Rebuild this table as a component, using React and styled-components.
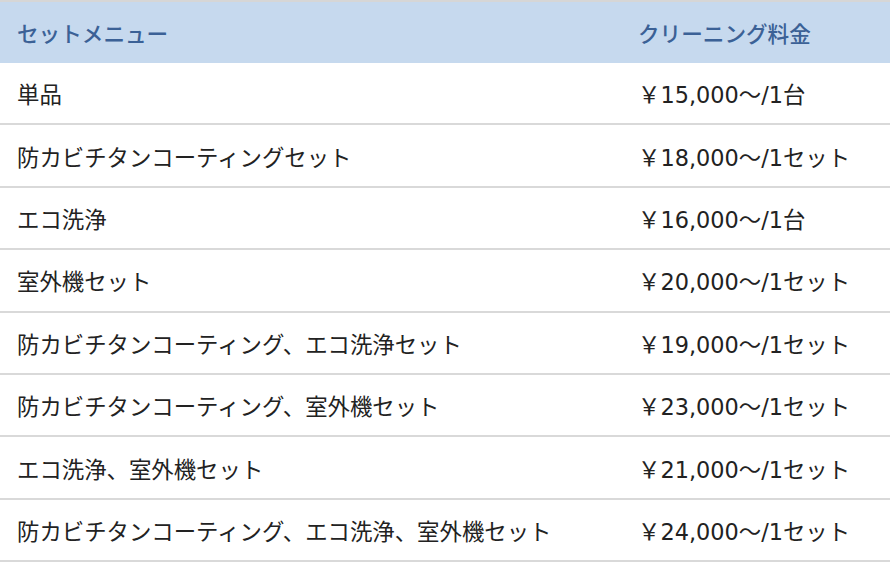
import React from 'react';
import styled, { createGlobalStyle } from 'styled-components';

const GlobalStyle = createGlobalStyle`
  body {
    margin: 0;
    background: #fff;
    font-family: "Noto Sans CJK JP", "Noto Sans", sans-serif;
  }
`;

const rows = [
  ['単品', '￥15,000～/1台'],
  ['防カビチタンコーティングセット', '￥18,000～/1セット'],
  ['エコ洗浄', '￥16,000～/1台'],
  ['室外機セット', '￥20,000～/1セット'],
  ['防カビチタンコーティング、エコ洗浄セット', '￥19,000～/1セット'],
  ['防カビチタンコーティング、室外機セット', '￥23,000～/1セット'],
  ['エコ洗浄、室外機セット', '￥21,000～/1セット'],
  ['防カビチタンコーティング、エコ洗浄、室外機セット', '￥24,000～/1セット'],
];

export default function App() {
  return (
    <>
      <GlobalStyle />
      <Table>
        <thead>
          <tr>
            <Th>セットメニュー</Th>
            <Th>クリーニング料金</Th>
          </tr>
        </thead>
        <tbody>
          {rows.map(([menu, price]) => (
            <Tr key={menu}>
              <Td>{menu}</Td>
              <Td $price>{price}</Td>
            </Tr>
          ))}
        </tbody>
      </Table>
    </>
  );
}

const Table = styled.table`
  width: 890px;
  border-collapse: collapse;
  border-top: 2px solid #d6d6d6;
  table-layout: fixed;

  th:first-child, td:first-child {
    width: 621px;
    padding-left: 17px;
  }
`;

const Th = styled.th`
  height: 61px;
  padding: 0;
  background: #c6d9ee;
  color: #3b6196;
  font-size: 21.6px;
  font-weight: 500;
  text-align: left;
  vertical-align: middle;
`;

const Tr = styled.tr`
  border-bottom: 2px solid #d9d9d9;
`;

const Td = styled.td`
  height: 60.4px;
  padding: 0;
  color: #222;
  font-size: 22.4px;
  font-family: ${(p) =>
    p.$price
      ? '"DejaVu Sans", "Noto Sans CJK JP", sans-serif'
      : '"Noto Sans CJK JP", sans-serif'};
  text-align: left;
  vertical-align: middle;
`;
